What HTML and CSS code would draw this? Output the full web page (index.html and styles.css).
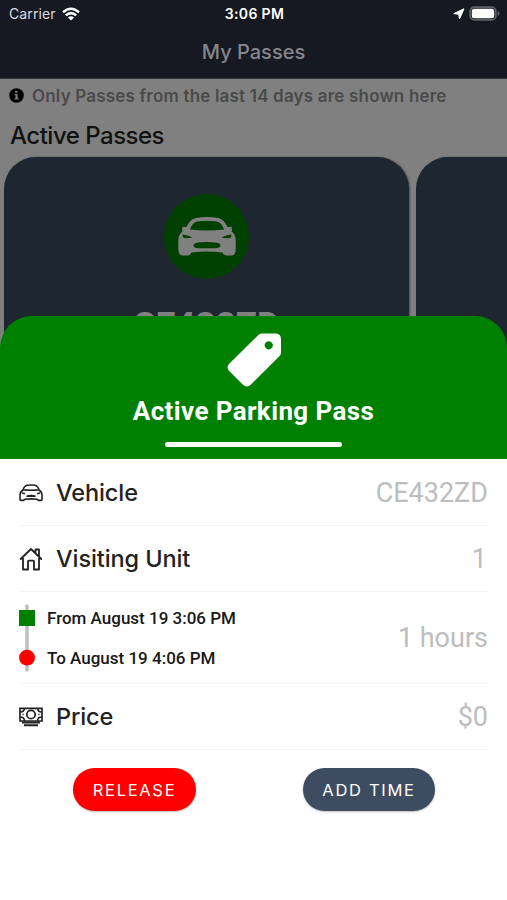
FILE: index.html
```html
<!DOCTYPE html>
<html lang="en">
<head>
<meta charset="utf-8">
<title>My Passes</title>
<link rel="stylesheet" href="styles.css">
</head>
<body>
<div class="screen">
  <header class="top">
    <div class="status">
      <div class="carrier"><span>Carrier</span>
        <svg width="18" height="14" viewBox="0 0 18 14" fill="none" stroke="#fff" stroke-width="2.5"><path d="M1 5.2Q9-1.8 17 5.2M3.8 8.4Q9 3.9 14.2 8.4"/><path d="M9 13.6 5.9 10.4Q9 8 12.1 10.4Z" fill="#fff" stroke="none"/></svg>
      </div>
      <time>3:06 PM</time>
      <div class="indicators">
        <svg width="12" height="12" viewBox="0 0 12 12"><path d="M11 .8 6.500 11 5.700 6.300.8 5.600Z" fill="#fff" stroke="#fff" stroke-linejoin="round" stroke-width="1"/></svg>
        <svg width="31" height="15" viewBox="0 0 31 15"><rect x="1.100" y="1.100" width="25.800" height="12.800" rx="4.200" fill="none" stroke="#5d5e66" stroke-width="1.700"/><rect x="2.800" y="2.800" width="22.400" height="9.400" rx="2.500" fill="#fff"/><path d="M28.600 5q2 .8 2 2.500t-2 2.500z" fill="#5d5e66"/></svg>
      </div>
    </div>
    <h1>My Passes</h1>
  </header>
  <main>
    <p class="notice">
      <svg width="15" height="15" viewBox="0 0 15 15"><circle cx="7.5" cy="7.5" r="7.3"/><path d="M6.3 3h2.3v1.8H6.3zM5.500 6h3.100v4.200h1v1.200H5.500v-1.200h1V7.200h-1z" fill="#808080"/></svg>
      <span>Only Passes from the last 14 days are shown here</span>
    </p>
    <h2>Active Passes</h2>
    <div class="cards">
      <article class="card">
        <div class="badge">
          <svg width="58" height="39" viewBox="0 0 58 39"><path fill="#808080" fill-rule="evenodd" d="M8.500 10C11 5 13.500 2 18 1Q29-.8 40 1C44.500 2 47 5 49.500 10L53.500 9.800 54 13 53.500 14.500Q57.500 17 57.700 23V33Q57.500 38.500 53 38.500H49Q45.500 38.500 44.500 35.500 29 33.500 13.500 35.500 12.500 38.500 9 38.500H5Q.5 38.500.3 33V23Q.5 17 4.500 14.500L4 13 4.500 9.800ZM12 12.500Q29 14.500 46 12.500 44 6 39 4.500 29 2.800 19 4.500 14 6 12 12.500ZM4.500 17.500Q4.500 20.500 6 21 11 21.500 14.500 20.500 10 18 4.500 17.500ZM53.500 17.500Q48 18 43.500 20.500 47 21.500 52 21 53.500 20.500 53.500 17.500ZM15.500 28Q15.500 31.200 21 31.300H37Q42.500 31.200 42.500 28 42.500 25 29 25T15.500 28Z"/></svg>
        </div>
        <strong>CE432ZD</strong>
      </article>
      <article class="card"></article>
    </div>
  </main>
  <section class="sheet">
    <header class="sheet-head">
      <svg width="54" height="56" viewBox="0 0 55 56"><path fill="#fff" fill-rule="evenodd" d="M32 1.500Q33.500 0 36 0H49q6 0 6 6V19q0 2.500-1.700 4.200L24 52.500q-4 3-7.500 0L2 38Q-1 34.500 2 31ZM42.500 7.800a4.200 4.200 0 1 0 .01 0Z"/></svg>
      <h2>Active Parking Pass</h2>
      <i></i>
    </header>
    <div class="rows">
      <div class="row">
        <svg width="24" height="18" viewBox="0 0 24 18" fill="none" stroke="#222" stroke-width="1.600"><path d="M3.700 6.300C5 3 6 1.600 8 1.200q4-.5 8 0c2 .4 3 1.800 4.300 5.100M3.700 5.800Q12 6.800 20.300 5.800M3.700 6.300Q1 8 1 11v4.500q0 .9 1 .9h2.500l1.500-1.200q6-.7 12 0l1.500 1.200H22q1 0 1-.9V11q0-3-2.700-4.700M3 9l3 .8M21 9l-3 .8"/><path d="M7.500 12.300q4.500-1.500 9 0Z" fill="#222"/></svg>
        <span class="label">Vehicle</span><span class="value">CE432ZD</span>
      </div>
      <div class="row">
        <svg width="24" height="24" viewBox="0 0 24 24" fill="none" stroke="#222" stroke-width="1.800" stroke-linejoin="round" stroke-linecap="round"><path d="M1.700 12 12 2 22.300 12M4 9.700V22.500h5v-8q0-.8.800-.8h4.400q.8 0 .8.800v8h5V9.700M16.500 5.500v-3H20V9"/></svg>
        <span class="label">Visiting Unit</span><span class="value one">1</span>
      </div>
      <div class="row period">
        <svg width="16" height="68" viewBox="0 0 16 68"><path d="M8 2V66" stroke="#c0c0c0" stroke-width="3.600" stroke-linecap="round"/><path d="M0 6h16v16H0z" fill="green"/><circle cx="8" cy="53.700" r="7.900" fill="red"/></svg>
        <div class="dates"><span class="from">From August 19 3:06 PM</span><span class="to">To August 19 4:06 PM</span></div>
        <span class="value">1 hours</span>
      </div>
      <div class="row price">
        <svg width="24" height="20" viewBox="0 0 24 20" fill="none" stroke="#222" stroke-width="1.700"><path d="M1 1.300h22v12.700H1zM1.500 5Q5 5 5.500 1.500M18.500 1.500Q19 5 22.500 5M1.500 10Q5 10 5.500 13.500M18.500 13.500Q19 10 22.500 10"/><path d="M3 15.500h18M5 18.200h14" stroke-width="2"/><circle cx="12" cy="7.500" r="4.200"/><path d="M3.500 7.500h1.200M19.300 7.500h1.200"/></svg>
        <span class="label">Price</span><span class="value">$0</span>
      </div>
    </div>
    <div class="actions">
      <button class="release">RELEASE</button>
      <button class="add">ADD TIME</button>
    </div>
  </section>
</div>
</body>
</html>
```
FILE: styles.css
```css
* { box-sizing: border-box; margin: 0; }
body { font-family: Inter, "Liberation Sans", sans-serif; }
svg { display: block; flex: none; }
span, h1, h2, time, strong { white-space: nowrap; }
.screen { width: 507px; height: 900px; overflow: hidden; background: #808080; display: grid; grid-template-rows: 316px 584px; }
.screen > * { grid-column: 1; }
.top { grid-row: 1; height: 79px; background: #161822; border-bottom: 1px solid #30323d; }
.status { height: 27px; display: grid; grid-template-columns: 1fr auto 1fr; align-items: center; padding: 0 7px 0 9px; color: #fff; font-size: 14px; }
.carrier, .indicators { display: flex; align-items: center; }
.carrier { gap: 6px; color: #dcdce0; letter-spacing: .1px; }
.indicators { justify-content: flex-end; gap: 4px; }
time { font-weight: 600; letter-spacing: .35px; }
.top h1 { text-align: center; color: #85868c; font-size: 20px; line-height: 51px; font-weight: 500; }
main { grid-row: 1; padding-top: 79px; height: 350px; overflow: hidden; }
.notice { display: flex; align-items: center; gap: 8px; height: 33px; padding-left: 9px; color: #4a4a4a; font-size: 17px; font-weight: 600; letter-spacing: .19px; }
main h2 { height: 45px; padding-left: 10px; line-height: 48px; color: #111; font-size: 24px; font-weight: 500; letter-spacing: -.5px; }
.cards { display: grid; grid-template-columns: 405px 405px; gap: 7px; padding-left: 4px; }
.card { height: 240px; background: #1e2730; border-radius: 32px; box-shadow: 1px 0 2px #4a4e52; display: flex; flex-direction: column; align-items: center; padding-top: 37px; }
.badge { width: 85px; height: 85px; border-radius: 50%; background: #004000; display: grid; place-items: center; }
.card strong { color: #808080; font: 900 34px/40px Roboto, sans-serif; letter-spacing: .5px; margin-top: 25px; }
.sheet { grid-row: 2; position: relative; background: green; border-radius: 32px 32px 0 0; }
.sheet-head { height: 143px; display: flex; flex-direction: column; align-items: center; padding-top: 17px; color: #fff; }
.sheet-head h2 { font: 700 26px/32px Roboto, sans-serif; letter-spacing: .38px; margin-top: 6px; }
.sheet-head i { width: 177px; height: 5px; border-radius: 3px; background: #fff; margin-top: 15px; }
.rows { padding: 0 19px; background: #fff; }
.row { height: 66px; display: flex; align-items: center; border-bottom: 1px solid #f4f4f4; padding-top: 1px; }
.row:first-child { height: 67px; }
.row + .row { padding-top: 0; }
.label { margin-left: 13px; color: #222; font-size: 23.5px; font-weight: 500; letter-spacing: -.1px; }
.value { margin-left: auto; color: #bdbdbd; font: 400 27px/32px Roboto, sans-serif; }
.one { padding-right: 1px; }
.period { height: 92px; }
.dates { display: flex; flex-direction: column; gap: 20px; margin-left: 12px; color: #181818; font: 500 17px/20px Roboto, sans-serif; }
.actions { display: flex; height: 150px; background: #fff; align-items: flex-start; padding: 18px 72px 0 73px; justify-content: space-between; }
button { border: 0; padding: 1px 0 0; height: 43px; border-radius: 22px; color: #fff; font: 400 16.5px/42px Inter, sans-serif; letter-spacing: 1.7px; box-shadow: 0 1px 2px #0004; }
.release { width: 123px; background: red; }
.add { width: 132px; background: #3d4c60; }
```
